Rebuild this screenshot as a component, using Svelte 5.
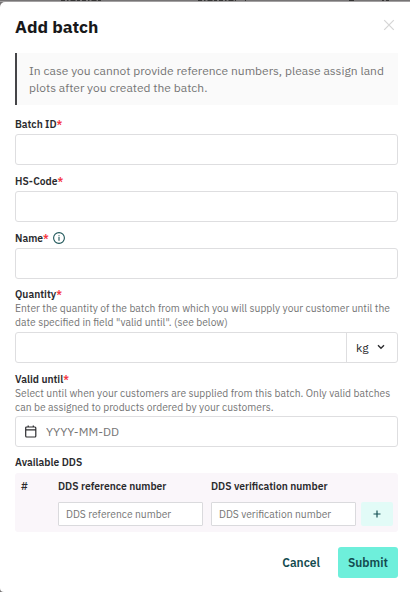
<script>
	const fields = [
		{ id: 'batch-id', label: 'Batch ID' },
		{ id: 'hs-code', label: 'HS-Code' },
		{ id: 'name', label: 'Name', info: true }
	];

	let values = $state({});
	let quantity = $state('');
	let validUntil = $state('');
	let reference = $state('');
	let verification = $state('');
</script>

<div class="page">
	<!-- sliver of the table header behind the modal -->
	<svg class="backdrop" width="410" height="2" viewBox="0 0 410 2" aria-hidden="true">
		<path class="edge" d="M0 1.5h410" />
		<path stroke-dasharray="4 2 1.500 2 5 1.500 3 2" d="M61 .5h40M198 .5h38" />
		<path d="M245 .5h1M349 .5h5M382 .5h2M386 .5h3" />
	</svg>
	<form class="modal" onsubmit={(e) => e.preventDefault()}>
		<header>
			<h1>Add batch</h1>
			<button type="button" class="close" aria-label="Close">
				<svg width="12" height="12" viewBox="0 0 12 12"><path d="M1.2 1.2l9.6 9.6M10.8 1.2l-9.6 9.6" /></svg>
			</button>
		</header>

		<div class="notice">
			In case you cannot provide reference numbers, please assign land<br />
			plots after you created the batch.
		</div>

		{#each fields as field}
			<div class="field">
				<label for={field.id}>
					<span>{field.label}</span><i>*</i>
					{#if field.info}
						<svg class="info" width="12" height="12" viewBox="0 0 12 12">
							<circle cx="6" cy="6" r="5.4" />
							<path d="M6 5v3.700M6 3.200v1" />
						</svg>
					{/if}
				</label>
				<input id={field.id} class="box" bind:value={values[field.id]} />
			</div>
		{/each}

		<div class="field described">
			<label for="quantity"><span>Quantity</span><i>*</i></label>
			<p>
				Enter the quantity of the batch from which you will supply your customer until the<br />
				date specified in field "valid until". (see below)
			</p>
			<div class="box group">
				<input id="quantity" bind:value={quantity} />
				<button type="button" class="unit">
					kg
					<svg width="8" height="6" viewBox="0 0 8 6"><path d="M1 1.2l3 3 3-3" /></svg>
				</button>
			</div>
		</div>

		<div class="field described">
			<label for="valid-until"><span>Valid until</span><i>*</i></label>
			<p>
				Select until when your customers are supplied from this batch. Only valid batches<br />
				can be assigned to products ordered by your customers.
			</p>
			<div class="box date">
				<svg width="12" height="13" viewBox="0 0 12 13">
					<path d="M1.6 2h8.300q.9 0 .9.9v8.200q0 .9-.9.9H1.600q-.9 0-.9-.9V2.900q0-.9.9-.9zM.7 4.800h10.100M3.200.6v1.500M8.300.6v1.500" />
				</svg>
				<input id="valid-until" placeholder="YYYY-MM-DD" bind:value={validUntil} />
			</div>
		</div>

		<h2>Available DDS</h2>
		<div class="dds">
			<b>#</b>
			<b>DDS reference number</b>
			<b>DDS verification number</b>
			<span></span>
			<span></span>
			<input placeholder="DDS reference number" bind:value={reference} />
			<input placeholder="DDS verification number" bind:value={verification} />
			<button type="button" class="add" aria-label="Add">
				<svg width="8" height="8" viewBox="0 0 8 8"><path d="M4 .5v7M.5 4h7" /></svg>
			</button>
		</div>

		<footer>
			<button type="button" class="cancel">Cancel</button>
			<button class="submit">Submit</button>
		</footer>
	</form>
</div>

<style>
	:global(body) {
		background: #767475;
	}
	* {
		box-sizing: border-box;
	}
	.page {
		height: 592px;
		overflow: hidden;
		display: flex;
		flex-direction: column;
		font-family: 'IBM Plex Sans', Roboto, sans-serif;
		color: #2a2a2d;
	}
	button {
		border: 0;
		padding: 0;
		background: none;
		font-family: inherit;
	}
	svg {
		display: block;
		flex: none;
		fill: none;
		stroke: #2c2c2f;
		stroke-width: 1.2;
	}
	.backdrop {
		stroke: #333;
		stroke-width: 1;
	}
	.edge {
		stroke: #a3a1a2;
	}
	.modal {
		flex: 1;
		background: #fff;
		border-radius: 5px 0 0 4px;
		padding: 14px 12px 0 15px;
	}
	header {
		display: flex;
		justify-content: space-between;
		height: 37px;
	}
	h1 {
		margin: 0;
		font-size: 17.4px;
		line-height: 22px;
		font-weight: 700;
		color: #18181a;
	}
	.close {
		height: 12px;
		margin: 3px 3px 0 0;
	}
	.close svg {
		stroke: #d5d5d5;
	}
	.notice {
		height: 52px;
		margin-bottom: 3.2px;
		border-left: 2px solid #454548;
		background: #fafafa;
		padding: 9px 0 0 12px;
		font-size: 12px;
		line-height: 17px;
		color: #757575;
		white-space: nowrap;
	}
	.field {
		padding-top: 9.8px;
	}
	label {
		display: flex;
		align-items: center;
		height: 13px;
		margin-bottom: 3px;
		font-size: 10.3px;
		line-height: 13px;
		font-weight: 600;
	}
	label i {
		font-style: normal;
		color: #f5333d;
	}
	.info {
		margin-left: 4px;
		stroke: #1d5558;
		stroke-width: 1.1;
	}
	.box {
		display: flex;
		width: 100%;
		height: 31px;
		border: 1px solid #dedee0;
		border-radius: 3px;
		background: #fff;
	}
	input {
		min-width: 0;
		border: 0;
		outline: 0;
		padding: 0;
		background: none;
		font-family: inherit;
		font-size: 12px;
		color: inherit;
	}
	input::placeholder {
		color: #757575;
		opacity: 1;
	}
	.described label {
		margin-bottom: 0;
	}
	p {
		margin: 0 0 2.6px;
		font-size: 10.3px;
		line-height: 14px;
		color: #757575;
		white-space: nowrap;
	}
	.group input {
		flex: 1;
	}
	.unit {
		display: flex;
		align-items: center;
		gap: 8px;
		width: 51px;
		border-left: 1px solid #dedee0;
		padding-left: 9px;
		font-size: 12px;
		color: #2c2c2f;
	}
	.unit svg {
		stroke-width: 1.4;
	}
	.date {
		align-items: center;
		gap: 9px;
		padding-left: 9px;
	}
	h2 {
		margin: 0 0 3.6px;
		padding-top: 9px;
		font-size: 10.3px;
		line-height: 13px;
		font-weight: 600;
	}
	.dds {
		display: grid;
		grid-template-columns: 37px 145px 8px 145px 5px 32px;
		grid-template-rows: 13px 24px;
		row-gap: 9px;
		height: 59px;
		padding: 7px 6px;
		border-radius: 3px;
		background: #faf6fa;
		font-size: 10.3px;
		line-height: 13px;
	}
	.dds > :nth-child(1),
	.dds > :nth-child(5) {
		grid-column: 1;
	}
	.dds > :nth-child(2),
	.dds > :nth-child(6) {
		grid-column: 2;
	}
	.dds > :nth-child(3),
	.dds > :nth-child(7) {
		grid-column: 4;
	}
	.dds > :nth-child(4),
	.dds > :nth-child(8) {
		grid-column: 6;
	}
	.dds b {
		font-weight: 600;
		white-space: nowrap;
	}
	.dds input {
		border: 1px solid #dadadd;
		border-radius: 1px;
		padding-left: 7px;
		background: #fff;
		font-size: 10.3px;
	}
	.add {
		display: flex;
		align-items: center;
		justify-content: center;
		border-radius: 2px;
		background: #e2fbf7;
	}
	.add svg {
		stroke: #155054;
	}
	footer {
		display: flex;
		justify-content: flex-end;
		align-items: center;
		margin-top: 15px;
		gap: 18px;
	}
	footer button {
		height: 31px;
		font-size: 12px;
		font-weight: 600;
		color: #134b4f;
	}
	footer .submit {
		width: 60px;
		border-radius: 3px;
		background: #6eefdb;
	}
</style>
